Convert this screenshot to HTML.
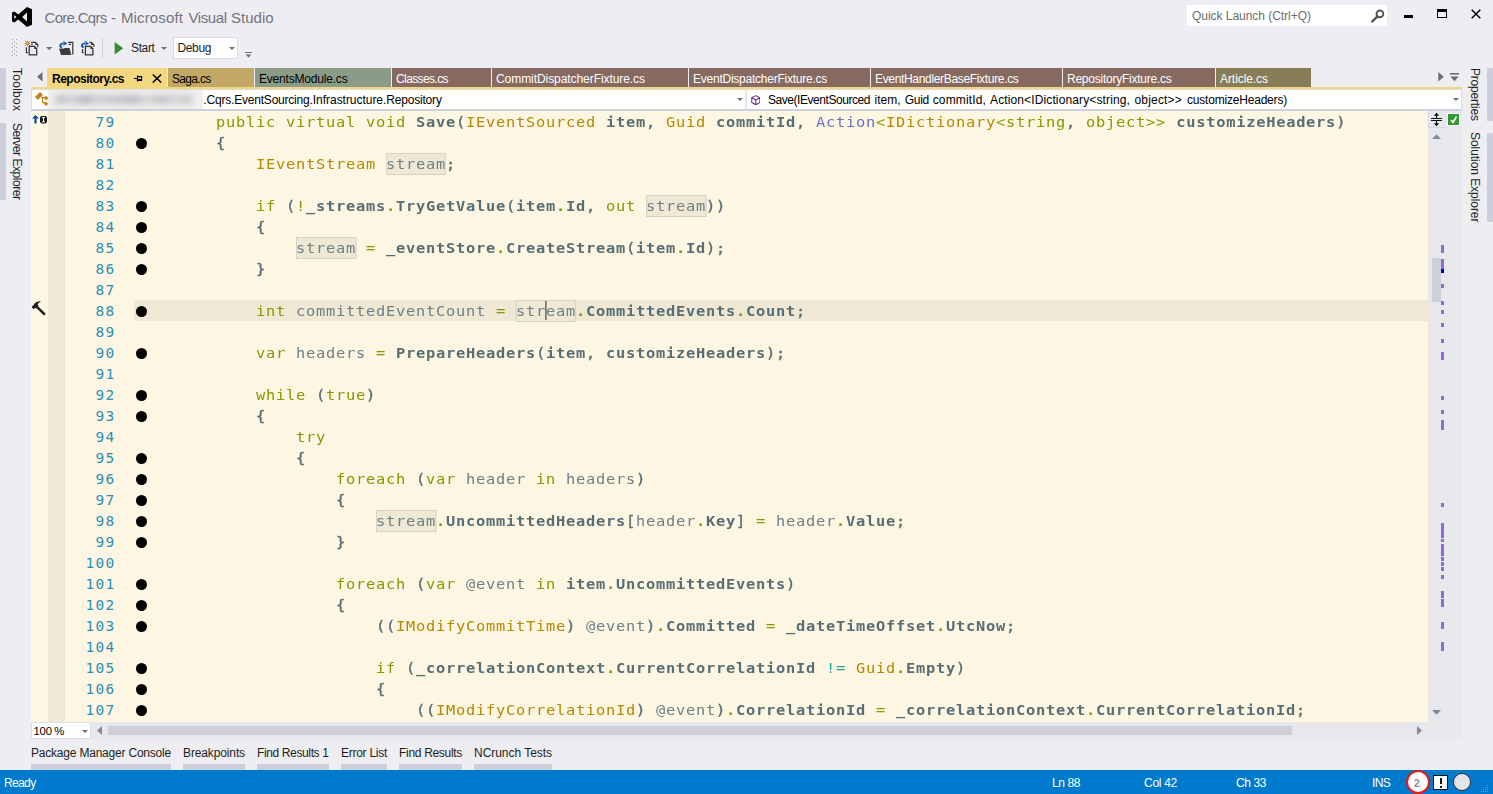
<!DOCTYPE html>
<html lang="en">
<head>
<meta charset="utf-8">
<title>Core.Cqrs - Microsoft Visual Studio</title>
<style>
*{box-sizing:border-box;margin:0;padding:0}
html,body{width:1493px;height:794px;overflow:hidden;background:#eeeef2}
body{position:relative;font-family:"Liberation Sans",sans-serif;font-size:12px;color:#1e1e1e}
.abs{position:absolute}
.t{position:absolute;white-space:nowrap;line-height:1}
/* title */
#title{left:44px;top:10px;font-size:15px;color:#71747f}
/* quick launch */
#ql{left:1187px;top:5px;width:200px;height:21px;background:#fff}
#ql span{left:5px;top:5px;font-size:12px;color:#6d6d6d}
/* toolbar */
#combo{left:173px;top:37px;width:65px;height:22px;background:#fff;border:1px solid #dcdde6}
/* tabs */
.tab{position:absolute;top:68px;height:19px;color:#fff;font-size:12px}
.tab span{position:absolute;left:4px;top:5px;white-space:nowrap;line-height:1}
/* editor */
#ed{left:31px;top:111px;width:1397px;height:611px;background:#fdf6e3;overflow:hidden}
#strip{left:17px;top:0;width:17px;height:611px;background:#eee8d5}
#cur{left:103px;top:189px;width:1294px;height:21px;background:#eee8d5}
.ln{position:absolute;left:0;top:1px;width:84.5px;text-align:right;color:#2a8fb8;letter-spacing:1.27px}
.row{position:absolute;left:0;height:21px;width:1397px;font-family:"DejaVu Sans Mono","Liberation Mono",monospace;font-size:14.5px;line-height:21px;white-space:pre}
.dot{position:absolute;left:105px;top:5.5px;width:11px;height:11px;border-radius:50%;background:#000}
.code{position:absolute;left:106px;top:1px;letter-spacing:0.704px;color:#6d8187;transform-origin:0 0;transform:scaleX(1.06)}
.k{color:#859900}.d{color:#859900;font-weight:bold}.y{color:#b58900}.v{color:#6c71c4}.c{color:#2aa198}
.b{color:#586e75;font-weight:bold}
.l{color:#6d8187}.p{color:#586e75;-webkit-text-stroke:0.38px #586e75}
.caret{position:absolute;width:1px;height:19px;background:#333;margin-top:1px;margin-left:-1px}
.hl{background:#eee8d5;outline:1px solid #d6d3c4;outline-offset:-1px;display:inline-block;height:21.5px;vertical-align:top;margin-top:-1px;line-height:23px}
/* bottom */
.bt{position:absolute;top:746px;font-size:12px;color:#1e1e1e;white-space:nowrap;line-height:14px}
.bu{position:absolute;top:764px;height:6px;background:#cccedb}
#status{left:0;top:770px;width:1493px;height:24px;background:#007acc;color:#fff}
#status .t{top:7px;font-size:12px}
.vt{position:absolute;white-space:nowrap;font-size:12px;line-height:1;color:#1e1e1e;transform-origin:0 0;transform:rotate(90deg)}
</style>
</head>
<body>
<!-- TITLE BAR -->
<svg class="abs" style="left:12px;top:7px" width="20" height="20" viewBox="0 0 20 20"><path fill="#000" fill-rule="evenodd" d="M15 0 L20 2.3 V17.7 L15 20 L6.3 12.4 L2.3 15.5 L0 14.4 V5.6 L2.3 4.5 L6.3 7.6 Z M15 5.6 L10.2 10 L15 14.4 Z M2.3 8 V12 L4.5 10 Z"/></svg>
<div id="title" class="t" style="width:240px;height:19px"><span class="t" id="ti0" style="letter-spacing:-0.707px;left:0.5px;top:0">Core.Cqrs</span><span class="t" id="ti1" style="letter-spacing:0.000px;left:67.0px;top:0">-</span><span class="t" id="ti2" style="letter-spacing:0.128px;left:77.0px;top:0">Microsoft</span><span class="t" id="ti3" style="letter-spacing:-0.416px;left:144.5px;top:0">Visual</span><span class="t" id="ti4" style="letter-spacing:0.026px;left:187.0px;top:0">Studio</span></div>
<div id="ql" class="abs"><span class="t" id="qlt" style="letter-spacing:-0.039px;">Quick Launch (Ctrl+Q)</span>
<svg class="abs" style="left:184px;top:4px" width="14" height="14" viewBox="0 0 14 14"><circle cx="8.9" cy="4.9" r="3.4" fill="none" stroke="#555" stroke-width="1.9"/><path d="M6.3 7.6 L1.3 12.4" stroke="#555" stroke-width="2.4" stroke-linecap="round"/></svg></div>
<div class="abs" style="left:1404px;top:14.5px;width:9px;height:3px;background:#000"></div>
<div class="abs" style="left:1437px;top:9px;width:10px;height:9px;border:1px solid #000;border-top-width:3px"></div>
<svg class="abs" style="left:1471px;top:9px" width="10" height="10" viewBox="0 0 10 10"><path d="M0.7 0.7 L9.3 9.3 M9.3 0.7 L0.7 9.3" stroke="#000" stroke-width="1.5"/></svg>
<!--TOOLBAR-->
<svg class="abs" style="left:11px;top:39px" width="7" height="18" viewBox="0 0 7 18"><g fill="#9d9d9d"><rect x="1" y="0" width="1" height="1"/><rect x="5" y="0" width="1" height="1"/><rect x="3" y="2" width="1" height="1"/><rect x="1" y="4" width="1" height="1"/><rect x="5" y="4" width="1" height="1"/><rect x="3" y="6" width="1" height="1"/><rect x="1" y="8" width="1" height="1"/><rect x="5" y="8" width="1" height="1"/><rect x="3" y="10" width="1" height="1"/><rect x="1" y="12" width="1" height="1"/><rect x="5" y="12" width="1" height="1"/><rect x="3" y="14" width="1" height="1"/><rect x="1" y="16" width="1" height="1"/><rect x="5" y="16" width="1" height="1"/></g></svg>
<svg class="abs" style="left:24px;top:40px" width="16" height="16" viewBox="0 0 16 16"><g fill="#c8821c"><rect x="0.8" y="0.8" width="1.05" height="1.05"/><rect x="2.9" y="0.8" width="1.05" height="1.05"/><rect x="5.0" y="0.8" width="1.05" height="1.05"/><rect x="1.8" y="1.8" width="1.05" height="1.05"/><rect x="3.9" y="1.8" width="1.05" height="1.05"/><rect x="0.8" y="2.9" width="1.05" height="1.05"/><rect x="1.8" y="2.9" width="1.05" height="1.05"/><rect x="3.9" y="2.9" width="1.05" height="1.05"/><rect x="5.0" y="2.9" width="1.05" height="1.05"/><rect x="1.8" y="3.9" width="1.05" height="1.05"/><rect x="3.9" y="3.9" width="1.05" height="1.05"/><rect x="0.8" y="5.0" width="1.05" height="1.05"/><rect x="2.9" y="5.0" width="1.05" height="1.05"/><rect x="5.0" y="5.0" width="1.05" height="1.05"/><rect x="2.9" y="1.8" width="1.05" height="1.05"/><rect x="2.9" y="3.9" width="1.05" height="1.05"/></g><path d="M7.1 2.4 H11.5 L13.8 4.7 V7.2 M7.1 4.4 H8.7 M2.4 7.2 V12.6 H3.8" fill="none" stroke="#333" stroke-width="1.2"/><path d="M11.3 2.2 V4.9 H14 Z" fill="#333"/><path d="M5.2 6.3 H10.5 L12.7 8.7 V14.75 H5.2 Z" fill="#e8e8ec" stroke="#333" stroke-width="1.25"/><path d="M10.3 6.1 V8.9 H12.9 Z" fill="#333"/></svg>
<svg class="abs" style="left:46px;top:47px" width="6.2" height="3.5" viewBox="0 0 7 4"><path d="M0 0 H7 L3.5 3.6 Z" fill="#6f6f7a"/></svg>
<svg class="abs" style="left:58px;top:40px" width="16" height="16" viewBox="0 0 16 16"><path d="M10.1 2.3 H14.8 V14.6 M10.9 4.4 H13" fill="none" stroke="#333" stroke-width="1.2"/><path d="M1.1 8.6 H6 L6.5 8 H11.5 L13.4 14.9 H3 Z" fill="#3c3c3b"/><path d="M4 7.5 C1.4 6.6 1.4 3.5 5.8 3.4" fill="none" stroke="#0f52b0" stroke-width="1.8"/><path d="M5 0.8 L9.3 3.4 L5 6 L6.3 3.4 Z" fill="#0f52b0"/></svg>
<svg class="abs" style="left:80px;top:40px" width="16" height="16" viewBox="0 0 16 16"><path d="M9.4 2.3 H11.4 L13.8 4.7 V6.8 M2.5 9.3 V12.6 H3.7" fill="none" stroke="#333" stroke-width="1.2"/><path d="M11.2 2.1 V4.9 H14 Z" fill="#333"/><path d="M5.4 6.3 H10.7 L12.9 8.7 V14.75 H5.4 Z" fill="#e8e8ec" stroke="#333" stroke-width="1.25"/><path d="M10.5 6.1 V8.9 H13.1 Z" fill="#333"/><path d="M3.6 7.5 C1.1 6.6 1.1 3.5 5.3 3.4" fill="none" stroke="#0f52b0" stroke-width="1.8"/><path d="M4.6 0.8 L8.9 3.4 L4.6 6 L5.9 3.4 Z" fill="#0f52b0"/></svg>
<div class="abs" style="left:102px;top:38px;width:1px;height:20px;background:#cccedb"></div>
<svg class="abs" style="left:114px;top:42px" width="10" height="13" viewBox="0 0 10 13"><path d="M0.7 0 L9.2 6.2 L0.7 12.4 Z" fill="#388a34"/></svg>
<div class="t" style="letter-spacing:-0.369px;left:131px;top:42px;font-size:12px;color:#1e1e1e" id="tstart">Start</div>
<svg class="abs" style="left:161px;top:47px" width="6" height="3" viewBox="0 0 6 3"><path d="M0 0 H6 L3 3 Z" fill="#6f6f7a"/></svg>
<div id="combo" class="abs"><div class="t" style="letter-spacing:-0.375px;left:3.5px;top:4px;font-size:12px" id="tdebug">Debug</div>
<svg class="abs" style="left:54.5px;top:9px" width="6" height="3" viewBox="0 0 6 3"><path d="M0 0 H6 L3 3 Z" fill="#6f6f7a"/></svg></div>
<svg class="abs" style="left:245px;top:51.5px" width="7" height="6" viewBox="0 0 7 6"><rect x="0" y="0" width="7" height="1" fill="#6f6f7a"/><path d="M0.5 2.5 H6.5 L3.5 5.6 Z" fill="#6f6f7a"/></svg>
<!--TABS-->
<svg class="abs" style="left:37px;top:72px" width="6" height="10" viewBox="0 0 6 10"><path d="M5.5 0 V9.4 L0 4.7 Z" fill="#6d6d6d"/></svg>
<div class="tab" style="left:47px;width:120px;background:#f2d680;color:#000;height:21px"><span style="letter-spacing:-0.498px;font-weight:bold;left:5px" id="tb0">Repository.cs</span>
<svg class="abs" style="left:87px;top:7px" width="9" height="8" viewBox="0 0 9 8"><path d="M0 3.5 H3.5 M3.5 0.6 V6.4 M3.5 1.6 H7.6 V4.6 H3.5 M3.5 5.4 H8" fill="none" stroke="#000" stroke-width="1.1"/></svg>
<svg class="abs" style="left:105px;top:6px" width="10" height="9" viewBox="0 0 10 9"><path d="M0.8 0.5 L9.2 8.5 M9.2 0.5 L0.8 8.5" stroke="#000" stroke-width="1.5"/></svg></div>
<div class="tab" style="left:168px;width:86px;background:#c2a865;color:#000"><span id="tb1" style="letter-spacing:-0.694px;">Saga.cs</span></div>
<div class="tab" style="left:255px;width:136px;background:#8a9c87;color:#000"><span id="tb2" style="letter-spacing:-0.193px;">EventsModule.cs</span></div>
<div class="tab" style="left:392px;width:99px;background:#866960"><span id="tb3" style="letter-spacing:-0.602px;">Classes.cs</span></div>
<div class="tab" style="left:492px;width:196px;background:#866960"><span id="tb4" style="letter-spacing:-0.066px;">CommitDispatcherFixture.cs</span></div>
<div class="tab" style="left:689px;width:181px;background:#866960"><span id="tb5" style="letter-spacing:-0.242px;">EventDispatcherFixture.cs</span></div>
<div class="tab" style="left:871px;width:191px;background:#866960"><span id="tb6" style="letter-spacing:-0.330px;">EventHandlerBaseFixture.cs</span></div>
<div class="tab" style="left:1063px;width:152px;background:#866960"><span id="tb7" style="letter-spacing:-0.244px;">RepositoryFixture.cs</span></div>
<div class="tab" style="left:1216px;width:95px;background:#877d58"><span id="tb8" style="letter-spacing:-0.069px;">Article.cs</span></div>
<svg class="abs" style="left:1438px;top:72px" width="6" height="10" viewBox="0 0 6 10"><path d="M0.3 0 V9.4 L5.8 4.7 Z" fill="#6d6d6d"/></svg>
<svg class="abs" style="left:1450px;top:73px" width="9" height="9" viewBox="0 0 9 9"><rect x="0" y="0" width="9" height="1.6" fill="#6d6d6d"/><path d="M0.3 3.6 H8.7 L4.5 8.2 Z" fill="#6d6d6d"/></svg>
<div class="abs" style="left:31px;top:87px;width:1431px;height:2px;background:#f2d680"></div>
<!--NAV-->
<div class="abs" style="left:31px;top:89px;width:1431px;height:22px;background:#fff;border:1px solid #d9dcec;border-bottom:2px solid #cdd0e2"></div>
<div class="abs" style="left:745px;top:90px;width:2px;height:19px;background:#e2e4f0"></div>
<svg class="abs" style="left:34px;top:91px" width="14" height="16" viewBox="0 0 14 16"><g fill="#c8821c"><path d="M6 0.9 L9 3.8 L3.9 9.1 L0.9 6 Z"/><path d="M12.1 4.8 L14.4 7.1 L12.1 9.4 L9.8 7.1 Z"/><path d="M12.1 10.5 L14.4 12.8 L12.1 15.1 L9.8 12.8 Z"/></g><path d="M7 6.5 H11 M8.6 6.5 V11.7 H11" fill="none" stroke="#c8821c" stroke-width="1.2"/></svg>
<div class="abs" style="left:48px;top:90px;width:155px;height:19px;background:#f1efec;overflow:hidden"><div class="abs" style="left:8px;top:5px;width:136px;height:9px;filter:blur(3px);background:linear-gradient(90deg,#bdbdc4 0,#d0d0d4 12%,#b4b4bc 22%,#cfcfd3 30%,#c4c4ca 45%,#b9b9c0 58%,#d6d6d9 66%,#bfbfc6 78%,#d4d4d8 88%,#c2c2c8 100%)"></div></div>
<div class="t" style="left:203px;top:94px;font-size:12px;color:#000;width:240px;height:12px" id="nav1"><span class="t" id="n1a" style="letter-spacing:-0.134px;left:0.2px;top:0">.Cqrs</span><span class="t" id="n1b" style="letter-spacing:-0.224px;left:28.2px;top:0">.EventSourcing</span><span class="t" id="n1c" style="letter-spacing:-0.035px;left:106.5px;top:0">.Infrastructure</span><span class="t" id="n1d" style="letter-spacing:-0.178px;left:180.0px;top:0">.Repository</span></div>
<svg class="abs" style="left:737px;top:98px" width="6" height="3" viewBox="0 0 6 3"><path d="M0 0 H6 L3 3 Z" fill="#6f6f7a"/></svg>
<svg class="abs" style="left:750.5px;top:94.5px" width="9.6" height="10.4" viewBox="0 0 11 12"><path d="M5.5 0.7 L10.2 3.2 V8.6 L5.5 11.3 L0.8 8.6 V3.2 Z M0.8 3.2 L5.5 5.8 L10.2 3.2 M5.5 5.8 V11.3" fill="none" stroke="#652d90" stroke-width="1.2" stroke-linejoin="round"/></svg>
<div class="t" style="left:768px;top:94px;font-size:12px;color:#000;width:520px;height:12px" id="nav2"><span class="t" id="n2a" style="letter-spacing:-0.448px;left:0.0px;top:0">Save(IEventSourced</span><span class="t" id="n2b" style="letter-spacing:0.037px;left:106.5px;top:0">item,</span><span class="t" id="n2c" style="letter-spacing:-0.265px;left:136.7px;top:0">Guid</span><span class="t" id="n2d" style="letter-spacing:0.143px;left:164.7px;top:0">commitId,</span><span class="t" id="n2e" style="letter-spacing:0.126px;left:222.0px;top:0">Action&lt;IDictionary&lt;string,</span><span class="t" id="n2f" style="letter-spacing:0.182px;left:366.5px;top:0">object&gt;&gt;</span><span class="t" id="n2g" style="letter-spacing:-0.199px;left:419.0px;top:0">customizeHeaders)</span></div>
<svg class="abs" style="left:1453px;top:98px" width="6" height="3" viewBox="0 0 6 3"><path d="M0 0 H6 L3 3 Z" fill="#6f6f7a"/></svg>
<!--EDITOR-->
<div id="ed" class="abs"><div id="strip" class="abs"></div><div id="cur" class="abs"></div>
<!--ROWS-->
<div class="row" style="top:0px"><span class="ln">79</span><span class="code" style="left:185px"><span class="k">public virtual void </span><span class="b">Save</span><span class="p">(</span><span class="y">IEventSourced</span> <span class="b">item</span><span class="p">,</span> <span class="y">Guid</span> <span class="b">commitId</span><span class="p">,</span> <span class="v">Action</span><span class="k">&lt;</span><span class="y">IDictionary</span><span class="k">&lt;string</span><span class="p">,</span><span class="k"> object&gt;&gt;</span> <span class="b">customizeHeaders</span><span class="p">)</span></span></div>
<div class="row" style="top:21px"><span class="ln">80</span><i class="dot"></i><span class="code" style="left:185px"><span class="p">{</span></span></div>
<div class="row" style="top:42px"><span class="ln">81</span><span class="code" style="left:225px"><span class="y">IEventStream</span> <span class="hl">stream</span><span class="p">;</span></span></div>
<div class="row" style="top:63px"><span class="ln">82</span></div>
<div class="row" style="top:84px"><span class="ln">83</span><i class="dot"></i><span class="code" style="left:225px"><span class="k">if</span> <span class="p">(</span><span class="k">!</span><span class="b">_streams</span><span class="d">.</span><span class="b">TryGetValue</span><span class="p">(</span><span class="b">item</span><span class="d">.</span><span class="b">Id</span><span class="p">,</span> <span class="k">out</span> <span class="hl">stream</span><span class="p">))</span></span></div>
<div class="row" style="top:105px"><span class="ln">84</span><i class="dot"></i><span class="code" style="left:225px"><span class="p">{</span></span></div>
<div class="row" style="top:126px"><span class="ln">85</span><i class="dot"></i><span class="code" style="left:265px"><span class="hl">stream</span> <span class="k">=</span> <span class="b">_eventStore</span><span class="d">.</span><span class="b">CreateStream</span><span class="p">(</span><span class="b">item</span><span class="d">.</span><span class="b">Id</span><span class="p">);</span></span></div>
<div class="row" style="top:147px"><span class="ln">86</span><i class="dot"></i><span class="code" style="left:225px"><span class="p">}</span></span></div>
<div class="row" style="top:168px"><span class="ln">87</span></div>
<div class="row" style="top:189px"><span class="ln">88</span><i class="dot"></i><span class="code" style="left:225px"><span class="k">int</span> <span class="l">committedEventCount</span> <span class="k">=</span> <span class="hl">str<i class="caret"></i>eam</span><span class="d">.</span><span class="b">CommittedEvents</span><span class="d">.</span><span class="b">Count</span><span class="p">;</span></span></div>
<div class="row" style="top:210px"><span class="ln">89</span></div>
<div class="row" style="top:231px"><span class="ln">90</span><i class="dot"></i><span class="code" style="left:225px"><span class="k">var</span> <span class="l">headers</span> <span class="k">=</span> <span class="b">PrepareHeaders</span><span class="p">(</span><span class="b">item</span><span class="p">,</span> <span class="b">customizeHeaders</span><span class="p">);</span></span></div>
<div class="row" style="top:252px"><span class="ln">91</span></div>
<div class="row" style="top:273px"><span class="ln">92</span><i class="dot"></i><span class="code" style="left:225px"><span class="k">while</span> <span class="p">(</span><span class="k">true</span><span class="p">)</span></span></div>
<div class="row" style="top:294px"><span class="ln">93</span><i class="dot"></i><span class="code" style="left:225px"><span class="p">{</span></span></div>
<div class="row" style="top:315px"><span class="ln">94</span><span class="code" style="left:265px"><span class="k">try</span></span></div>
<div class="row" style="top:336px"><span class="ln">95</span><i class="dot"></i><span class="code" style="left:265px"><span class="p">{</span></span></div>
<div class="row" style="top:357px"><span class="ln">96</span><i class="dot"></i><span class="code" style="left:305px"><span class="k">foreach</span> <span class="p">(</span><span class="k">var</span> <span class="l">header</span> <span class="k">in</span> <span class="l">headers</span><span class="p">)</span></span></div>
<div class="row" style="top:378px"><span class="ln">97</span><i class="dot"></i><span class="code" style="left:305px"><span class="p">{</span></span></div>
<div class="row" style="top:399px"><span class="ln">98</span><i class="dot"></i><span class="code" style="left:345px"><span class="hl">stream</span><span class="d">.</span><span class="b">UncommittedHeaders</span><span class="p">[</span><span class="l">header</span><span class="d">.</span><span class="b">Key</span><span class="p">]</span> <span class="k">=</span> <span class="l">header</span><span class="d">.</span><span class="b">Value</span><span class="p">;</span></span></div>
<div class="row" style="top:420px"><span class="ln">99</span><i class="dot"></i><span class="code" style="left:305px"><span class="p">}</span></span></div>
<div class="row" style="top:441px"><span class="ln">100</span></div>
<div class="row" style="top:462px"><span class="ln">101</span><i class="dot"></i><span class="code" style="left:305px"><span class="k">foreach</span> <span class="p">(</span><span class="k">var</span> <span class="l">@event</span> <span class="k">in</span> <span class="b">item</span><span class="d">.</span><span class="b">UncommittedEvents</span><span class="p">)</span></span></div>
<div class="row" style="top:483px"><span class="ln">102</span><i class="dot"></i><span class="code" style="left:305px"><span class="p">{</span></span></div>
<div class="row" style="top:504px"><span class="ln">103</span><i class="dot"></i><span class="code" style="left:345px"><span class="p">((</span><span class="y">IModifyCommitTime</span><span class="p">)</span> <span class="l">@event</span><span class="p">)</span><span class="d">.</span><span class="b">Committed</span> <span class="k">=</span> <span class="b">_dateTimeOffset</span><span class="d">.</span><span class="b">UtcNow</span><span class="p">;</span></span></div>
<div class="row" style="top:525px"><span class="ln">104</span></div>
<div class="row" style="top:546px"><span class="ln">105</span><i class="dot"></i><span class="code" style="left:345px"><span class="k">if</span> <span class="p">(</span><span class="b">_correlationContext</span><span class="d">.</span><span class="b">CurrentCorrelationId</span> <span class="c">!=</span> <span class="y">Guid</span><span class="d">.</span><span class="b">Empty</span><span class="p">)</span></span></div>
<div class="row" style="top:567px"><span class="ln">106</span><i class="dot"></i><span class="code" style="left:345px"><span class="p">{</span></span></div>
<div class="row" style="top:588px"><span class="ln">107</span><i class="dot"></i><span class="code" style="left:385px"><span class="p">((</span><span class="y">IModifyCorrelationId</span><span class="p">)</span> <span class="l">@event</span><span class="p">)</span><span class="d">.</span><span class="b">CorrelationId</span> <span class="k">=</span> <span class="b">_correlationContext</span><span class="d">.</span><span class="b">CurrentCorrelationId</span><span class="p">;</span></span></div>
<!--/ROWS-->
<svg class="abs" style="left:0.5px;top:4px" width="15" height="9" viewBox="0 0 15 9"><path d="M3.5 0 L7 3.6 H4.6 V8.4 H2.4 V3.6 H0 Z" fill="#0a4aa6"/><rect x="8" y="1" width="7" height="7.4" rx="1.8" fill="#1a1a1a"/><path d="M10 2.6 H13 M10 6.8 H13 M11.5 2.6 V6.8" stroke="#fff" stroke-width="1"/></svg>
<svg class="abs" style="left:-0.3px;top:189.5px" width="16" height="16" viewBox="0 0 16 16"><path d="M6.5 6.3 L13.2 13" stroke="#222" stroke-width="2.5" stroke-linecap="round"/><path d="M0.6 6 L2.6 8.2 L4.2 6.9 L5.6 7.2 L7.3 5 L6.8 3.2 C7.4 2 8.4 1.4 9.6 1 L9.2 0.2 C6.4 0.1 4 1.4 2.8 3.8 Z" fill="#222"/></svg>
</div>
<!-- editor scrollbars -->
<div class="abs" style="left:1428px;top:111px;width:34px;height:628px;background:#e8e8ec"></div>
<div class="abs" style="left:31px;top:722px;width:1397px;height:17px;background:#e8e8ec"></div>
<div class="abs" style="left:1428px;top:111px;width:17px;height:17px;border-left:1px solid #d4d6e2;border-bottom:1px solid #d4d6e2"></div>
<svg class="abs" style="left:1431px;top:112px" width="12" height="15" viewBox="0 0 12 15"><path d="M0 6.5 H11 M0 8.5 H11" stroke="#111" stroke-width="1"/><path d="M5.5 1.5 V6 M5.5 9 V13.5" stroke="#111" stroke-width="1.1"/><path d="M2.8 3.8 L5.5 0.8 L8.2 3.8 Z M2.8 11.2 L5.5 14.2 L8.2 11.2 Z" fill="#111"/></svg>
<div class="abs" style="left:1447px;top:113px;width:13px;height:13px;background:#339933;border:1px solid #fbfbfd"></div>
<svg class="abs" style="left:1448px;top:114px" width="11" height="11" viewBox="0 0 11 11"><path d="M3 6.2 L5 8.4 L8.4 2.6" fill="none" stroke="#fff" stroke-width="1.7"/></svg>
<svg class="abs" style="left:1432px;top:134px" width="9" height="5" viewBox="0 0 9 5"><path d="M0 5 H9 L4.5 0.2 Z" fill="#868999"/></svg>
<svg class="abs" style="left:1432px;top:710px" width="9" height="5" viewBox="0 0 9 5"><path d="M0 0 H9 L4.5 4.7 Z" fill="#868999"/></svg>
<div class="abs" style="left:1432px;top:258px;width:9px;height:44px;background:#cfd0d7"></div>
<i class="abs" style="left:1441px;top:245px;width:3px;height:8px;background:#8e6ad8"></i><i class="abs" style="left:1441px;top:259px;width:3px;height:10px;background:#8e6ad8"></i><i class="abs" style="left:1441px;top:284px;width:3px;height:4px;background:#8e6ad8"></i><i class="abs" style="left:1441px;top:301px;width:3px;height:4px;background:#8e6ad8"></i><i class="abs" style="left:1441px;top:310px;width:3px;height:4px;background:#8e6ad8"></i><i class="abs" style="left:1441px;top:323px;width:3px;height:4px;background:#8e6ad8"></i><i class="abs" style="left:1441px;top:339px;width:3px;height:4px;background:#8e6ad8"></i><i class="abs" style="left:1441px;top:352px;width:3px;height:8px;background:#8e6ad8"></i><i class="abs" style="left:1441px;top:396px;width:3px;height:4px;background:#8e6ad8"></i><i class="abs" style="left:1441px;top:410px;width:3px;height:4px;background:#8e6ad8"></i><i class="abs" style="left:1441px;top:420px;width:3px;height:10px;background:#8e6ad8"></i><i class="abs" style="left:1441px;top:503px;width:3px;height:4px;background:#8e6ad8"></i><i class="abs" style="left:1441px;top:523px;width:3px;height:15px;background:#8e6ad8"></i><i class="abs" style="left:1441px;top:539px;width:3px;height:3px;background:#8e6ad8"></i><i class="abs" style="left:1441px;top:544px;width:3px;height:12px;background:#8e6ad8"></i><i class="abs" style="left:1441px;top:557px;width:3px;height:4px;background:#8e6ad8"></i><i class="abs" style="left:1441px;top:562px;width:3px;height:4px;background:#8e6ad8"></i><i class="abs" style="left:1441px;top:567px;width:3px;height:4px;background:#8e6ad8"></i><i class="abs" style="left:1441px;top:575px;width:3px;height:4px;background:#8e6ad8"></i><i class="abs" style="left:1441px;top:591px;width:3px;height:7px;background:#8e6ad8"></i><i class="abs" style="left:1441px;top:599px;width:3px;height:8px;background:#8e6ad8"></i><i class="abs" style="left:1441px;top:622px;width:3px;height:7px;background:#8e6ad8"></i><i class="abs" style="left:1441px;top:642px;width:3px;height:9px;background:#8e6ad8"></i><i class="abs" style="left:1441px;top:269px;width:3px;height:4px;background:#0000cd"></i>
<!-- h scroll -->
<div class="abs" style="left:31px;top:722px;width:60px;height:17px;background:#fff;border:1px solid #dcdde6"><div class="t" style="left:0;top:3px;font-size:11.3px;color:#000;width:40px;height:12px"><span class="t" id="zoomt" style="letter-spacing:-0.220px;left:1.5px;top:0">100</span> <span class="t" id="zoomp" style="letter-spacing:0.853px;left:22.3px;top:0">%</span></div>
<svg class="abs" style="left:50px;top:7px" width="6" height="3" viewBox="0 0 6 3"><path d="M0 0 H6 L3 3 Z" fill="#6f6f7a"/></svg></div>
<svg class="abs" style="left:97px;top:726px" width="5" height="9" viewBox="0 0 5 9"><path d="M5 0 V9 L0 4.5 Z" fill="#868999"/></svg>
<svg class="abs" style="left:1417px;top:726px" width="5" height="9" viewBox="0 0 5 9"><path d="M0 0 V9 L5 4.5 Z" fill="#868999"/></svg>
<div class="abs" style="left:108px;top:726px;width:1184px;height:9px;background:#cfd0d7"></div>
<!--SIDES-->
<div class="abs" style="left:0;top:68px;width:6px;height:42px;background:#cccedb"></div>
<div class="abs" style="left:0;top:123px;width:6px;height:77px;background:#cccedb"></div>
<div class="vt" style="letter-spacing:0.275px;left:22.5px;top:68px" id="vt1">Toolbox</div>
<div class="vt" style="letter-spacing:-0.458px;left:22.5px;top:123px" id="vt2">Server Explorer</div>
<div class="abs" style="left:1487px;top:68px;width:6px;height:53px;background:#cccedb"></div>
<div class="abs" style="left:1487px;top:133px;width:6px;height:89px;background:#cccedb"></div>
<div class="vt" style="letter-spacing:-0.200px;left:1481px;top:68px" id="vt3">Properties</div>
<div class="vt" style="letter-spacing:-0.058px;left:1481px;top:132px" id="vt4">Solution Explorer</div>
<!--BOTTOM-->
<div class="bt" style="letter-spacing:-0.207px;left:31px" id="bt0">Package Manager Console</div><div class="bu" style="left:31px;width:140px"></div>
<div class="bt" style="letter-spacing:-0.125px;left:183px" id="bt1">Breakpoints</div><div class="bu" style="left:183px;width:62px"></div>
<div class="bt" style="letter-spacing:-0.372px;left:257px" id="bt2">Find Results 1</div><div class="bu" style="left:257px;width:72px"></div>
<div class="bt" style="letter-spacing:-0.269px;left:341px" id="bt3">Error List</div><div class="bu" style="left:341px;width:46px"></div>
<div class="bt" style="letter-spacing:-0.309px;left:399px" id="bt4">Find Results</div><div class="bu" style="left:399px;width:63px"></div>
<div class="bt" style="letter-spacing:-0.037px;left:474px" id="bt5">NCrunch Tests</div><div class="bu" style="left:474px;width:78px"></div>
<div id="status" class="abs">
<div class="t" style="letter-spacing:-0.637px;left:4px" id="st0">Ready</div>
<div class="t" style="letter-spacing:-0.406px;left:1052px" id="st1">Ln 88</div>
<div class="t" style="letter-spacing:-0.281px;left:1144px" id="st2">Col 42</div>
<div class="t" style="letter-spacing:-0.406px;left:1236px" id="st3">Ch 33</div>
<div class="t" style="letter-spacing:-0.672px;left:1372px" id="st4">INS</div>
<div class="abs" style="left:1406px;top:0;width:24px;height:24px;border-radius:50%;background:#fff;border:2px solid #e51a1a"></div>
<div class="t" style="left:1414px;top:7.5px;font-size:10.5px;font-weight:bold;color:#8f8f8f" id="st5">2</div>
<div class="abs" style="left:1433px;top:5px;width:15px;height:15px;background:#fff;border:1.5px solid #111"></div>
<div class="abs" style="left:1439.5px;top:8px;width:2px;height:6px;background:#111"></div>
<div class="abs" style="left:1439.5px;top:15.5px;width:2px;height:2px;background:#111"></div>
<div class="abs" style="left:1453px;top:3px;width:18px;height:18px;border-radius:50%;background:#e4e4e4;border:1.5px solid #333"></div>
<svg class="abs" style="left:1479px;top:13px" width="10" height="10" viewBox="0 0 10 10"><g fill="#4f9fdc"><rect x="8" y="2" width="1" height="1"/><rect x="6" y="4" width="1" height="1"/><rect x="8" y="4" width="1" height="1"/><rect x="4" y="6" width="1" height="1"/><rect x="6" y="6" width="1" height="1"/><rect x="8" y="6" width="1" height="1"/><rect x="2" y="8" width="1" height="1"/><rect x="4" y="8" width="1" height="1"/><rect x="6" y="8" width="1" height="1"/><rect x="8" y="8" width="1" height="1"/></g></svg>
</div>
</body>
</html>
